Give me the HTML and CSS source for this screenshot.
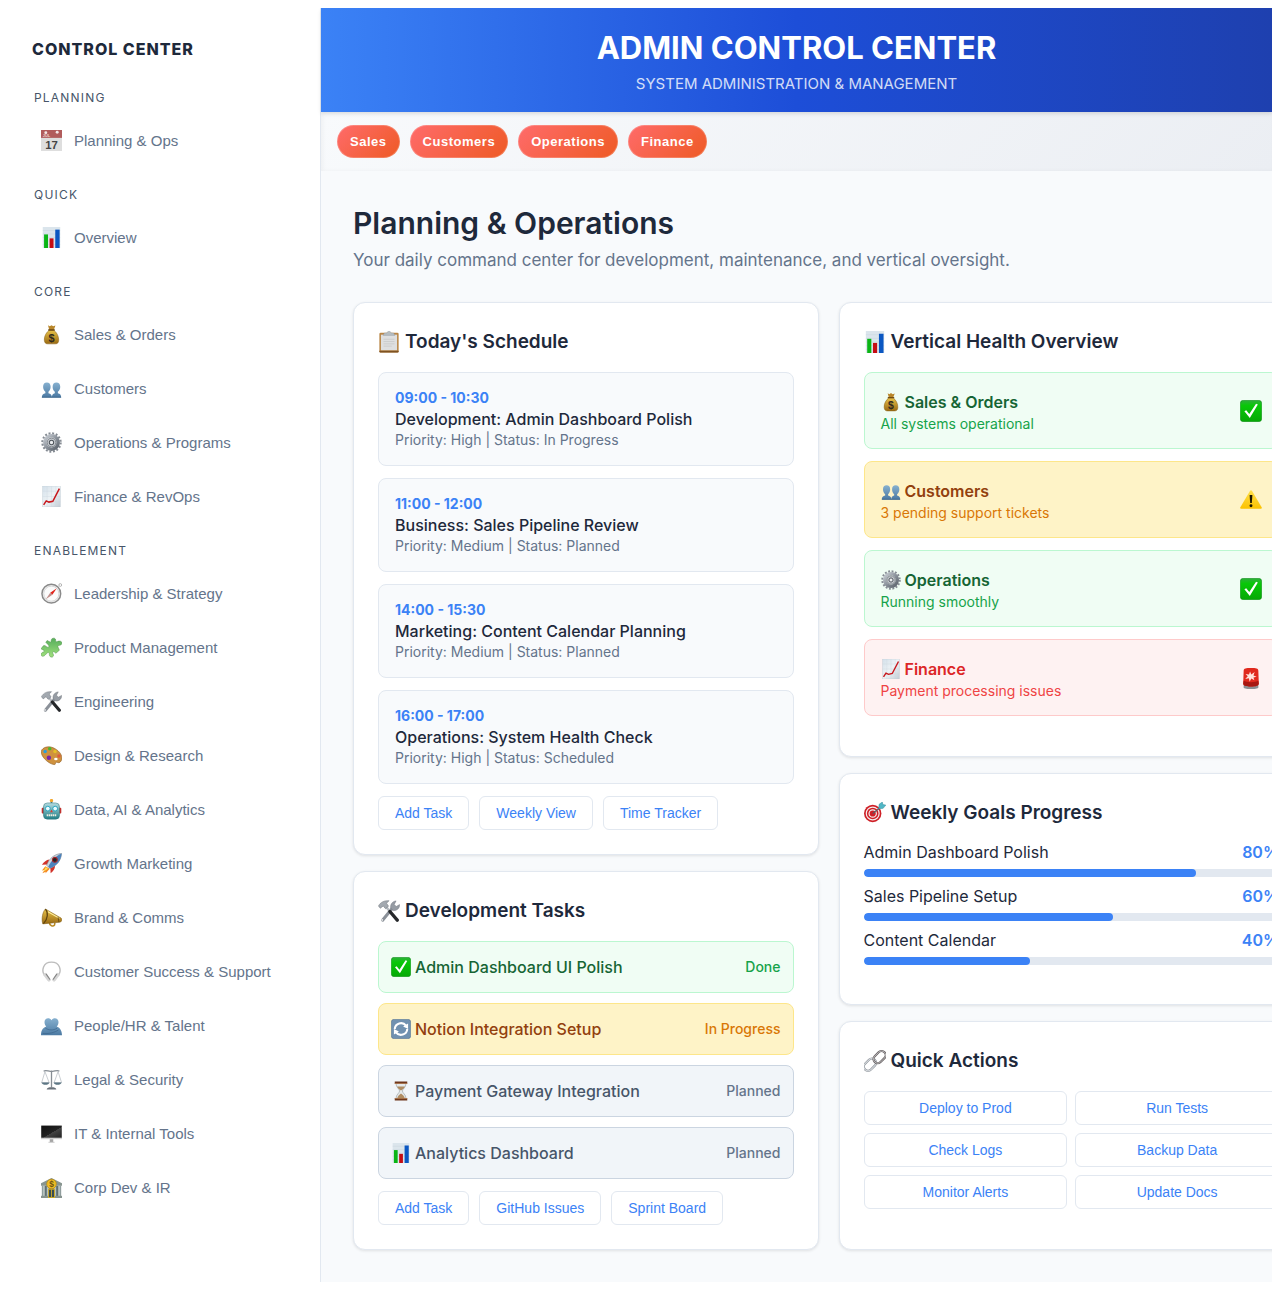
FILE: index.html
```html
<!DOCTYPE html>
<html lang="en">
<head>
<meta charset="utf-8">
<meta name="viewport" content="width=device-width, initial-scale=1">
<title>Admin Control Center</title>
<link rel="stylesheet" href="styles.css">
</head>
<body>
<svg class="sprite" aria-hidden="true">
  <defs>
    <linearGradient id="g-steel" x1="0" y1="0" x2="1" y2="1"><stop offset="0" stop-color="#c9ced4"/><stop offset=".5" stop-color="#8b929b"/><stop offset="1" stop-color="#5c636c"/></linearGradient>
    <linearGradient id="g-gold" x1="0" y1="0" x2="0" y2="1"><stop offset="0" stop-color="#e8c34a"/><stop offset="1" stop-color="#9a6a12"/></linearGradient>
    <linearGradient id="g-green" x1="0" y1="0" x2="0" y2="1"><stop offset="0" stop-color="#2fae3c"/><stop offset=".25" stop-color="#08c808"/><stop offset="1" stop-color="#06a806"/></linearGradient>
    <linearGradient id="g-blue" x1="0" y1="0" x2="0" y2="1"><stop offset="0" stop-color="#86b0cf"/><stop offset="1" stop-color="#4c7aa3"/></linearGradient>
    <linearGradient id="g-paper" x1="0" y1="0" x2="1" y2="1"><stop offset="0" stop-color="#d3e0ea"/><stop offset=".5" stop-color="#eef3f6"/><stop offset="1" stop-color="#c3cdd6"/></linearGradient>
    <linearGradient id="g-screen" x1="0" y1="0" x2="1" y2="1"><stop offset="0" stop-color="#111"/><stop offset=".55" stop-color="#222"/><stop offset=".56" stop-color="#444"/><stop offset="1" stop-color="#222"/></linearGradient>
    <linearGradient id="g-leaf" x1="0" y1="0" x2="0" y2="1"><stop offset="0" stop-color="#55ad5c"/><stop offset="1" stop-color="#a0e07c"/></linearGradient>
    <linearGradient id="g-teal" x1="0" y1="0" x2="0" y2="1"><stop offset="0" stop-color="#b5dbe0"/><stop offset="1" stop-color="#1f7f86"/></linearGradient>
    <linearGradient id="g-warn" x1="0" y1="0" x2="0" y2="1"><stop offset="0" stop-color="#ffdf4a"/><stop offset="1" stop-color="#fcc200"/></linearGradient>
  </defs>
  <symbol id="i-calendar" viewBox="0 0 24 24"><rect width="24" height="24" fill="#dedede"/><rect width="24" height="9" fill="#b15c5c"/><circle cx="5.500" cy="3" r="1.700" fill="#f4e6e6"/><circle cx="18.500" cy="2.500" r="1.700" fill="#f4e6e6"/><text x="2" y="8.500" class="glyph" font-size="4.500" fill="#ecd0d0">JUL</text><text x="12" y="21.500" class="glyph" font-size="13" text-anchor="middle" fill="#444">17</text></symbol>
  <symbol id="i-chart" viewBox="0 0 24 24"><rect x="2" width="20" height="24" fill="#dbe5ec"/><path d="M2 4h20M2 8h20M2 12h20M2 16h20M2 20h20" stroke="#c6d3dd" stroke-width=".5"/><rect x="3.500" y="8.500" width="4.500" height="15.500" fill="#0ab515"/><rect x="9.800" y="13" width="4.500" height="11" fill="#c50d14"/><rect x="16.300" y="3" width="5" height="21" fill="#0b57c2"/></symbol>
  <symbol id="i-money" viewBox="0 0 24 24"><path d="M8 1.500l2 1.200 2-1.400 2 1.400 2.500-1-2 5.300h-5z" fill="#b8862a"/><path d="M9.500 7C6 9.500 3.500 14 3.800 18.500c.2 3.300 2 4.200 4 4.200h8.400c2.200 0 3.900-1 4-4.200C20.400 14 18 9.500 14.500 7z" fill="url(#g-gold)" stroke="#8a6218" stroke-width=".6"/><path d="M8.800 6.800h6.400" stroke="#6e4a12" stroke-width="1.600" stroke-linecap="round"/><text x="12" y="20" class="glyph" font-size="12.500" text-anchor="middle" fill="#2f2a1e">$</text></symbol>
  <symbol id="i-people" viewBox="0 0 24 24"><g fill="url(#g-blue)"><path d="M1 22c0-3 1.500-3.700 4-4.600v-1.600C3.300 14.500 2.400 12.300 2.400 10c0-3 1.600-4.800 4.300-4.800S11 7 11 10c0 2.300-.9 4.500-2.500 5.800v1.600c2.300.9 4 1.600 4 4.600z"/><path d="M12.500 22c0-3 1-3.700 3.300-4.600v-1.600C14 14.500 13.300 12.300 13.300 10c0-3 1.600-4.800 4.300-4.800S22 7 22 10c0 2.300-.9 4.500-2.700 5.800v1.600C21.800 18.300 23 19 23 22z"/></g><path d="M1 21.300h22v1.300H1z" fill="#436c92"/></symbol>
  <symbol id="i-gear" viewBox="0 0 24 24"><circle cx="12" cy="12" r="10.400" fill="none" stroke="#858b93" stroke-width="2.600" stroke-dasharray="2.200 1.920"/><circle cx="12" cy="12" r="7.600" fill="none" stroke="url(#g-steel)" stroke-width="4"/><circle cx="12" cy="12" r="5" fill="#c8ccd1" stroke="#6c727a"/><circle cx="12" cy="12" r="2.500" fill="#eceef0" stroke="#4f555c" stroke-width="1.200"/></symbol>
  <symbol id="i-trend" viewBox="0 0 24 24"><rect x="2" width="20" height="24" fill="url(#g-paper)" stroke="#bcc8d1" stroke-width=".5"/><path d="M7 0v24M12 0v24M17 0v24M2 6h20M2 12h20M2 18h20" stroke="#cbd6df" stroke-width=".4"/><path d="M3 21.500l3-4.500 3 1.400 4.500-1L21 3" fill="none" stroke="#c8171c" stroke-width="1.700"/></symbol>
  <symbol id="i-compass" viewBox="0 0 24 24"><circle cx="22" cy="2.300" r="1.600" fill="none" stroke="#999" stroke-width=".8"/><circle cx="11.800" cy="12.200" r="10.700" fill="#f0f0f0" stroke="#8a8a8a" stroke-width="1.700"/><circle cx="11.800" cy="12.200" r="8.600" fill="#fbfbfb" stroke="#c4c4c4" stroke-width=".7"/><path d="M18 6l-7.500 5 2.500 2.500z" fill="#e0241b"/><path d="M5.500 18.500l5-7.500 2.500 2.500z" fill="#c08d8a"/></symbol>
  <symbol id="i-puzzle" viewBox="0 0 24 24"><path d="M7 4l4 2c1-1 0-2.500 1.500-4 1.600-1.400 4.600-.6 4.300 1.800-.2 1.600.5 2 1.900 1.300 2.500-1 5.300-.3 5.200 2-.1 2-2.200 2.300-3.600 2.500-1.300.2-1.200 1.300-.6 2.500l1.300 3-4 3.500-1.800-1.500c-1.300-.9-2.500.3-1.600 1.800 1.500 2.200.2 4.700-2.100 4-2-.5-2-2.600-2-4-.1-1.200-1-1.400-2-.9-1.900 1-3.200 4.500-5.800 4-2.400-.6-2-3.700.2-4.500 1.700-.6 2.300-1.200 1.600-2.200L0 13.500 2.700 10c2.400-1.500 3.900 2.800 6 1.500C10.400 10 6.500 7.500 5.500 6z" fill="url(#g-leaf)" stroke="#56964f" stroke-width=".6"/></symbol>
  <symbol id="i-tools" viewBox="0 0 24 24"><path d="M16 8.500L5 22" stroke="#8b9199" stroke-width="3.400" stroke-linecap="round"/><path d="M14 9c-1-4 1.500-7.500 5.700-8l-2 3.800 2.200 2.300L23.500 5c.4 4-3 7-7 6.500z" fill="#969ca4" stroke="#6b7178" stroke-width=".5"/><circle cx="4.600" cy="21.700" r="1" fill="#eee"/><path d="M8 6.500l6 7" stroke="#b6bbc1" stroke-width="2.600"/><path d="M13 12.500l8 9.500" stroke="#25272a" stroke-width="3.600" stroke-linecap="round"/><path d="M.5 6.500C3 2 7 .5 12 .8L9.300 3.500l2.200 3.300-3.300 2.700-2.500-3L2.500 9z" fill="#a3a9b0" stroke="#71777f" stroke-width=".6"/></symbol>
  <symbol id="i-palette" viewBox="0 0 24 24"><path d="M1 5.500C4 1.500 10.500 1 16 4.200c5.500 3 8.500 8 7.700 12-.7 3.500-3 4.500-4.700 3.800-2-.8-2.500 0-2.500 1.200 0 1.500-1.800 1.500-4.500.3C5.500 19-2 10.500 1 5.500z" fill="#cf923f" stroke="#8d5b1d" stroke-width=".7"/><ellipse cx="17" cy="16" rx="2" ry="1.400" fill="#fff"/><circle cx="4.700" cy="7.500" r="2" fill="#2b9fd9"/><circle cx="10" cy="4.300" r="2" fill="#45b82e"/><circle cx="16" cy="7.500" r="2" fill="#e3c028"/><circle cx="20.500" cy="12.500" r="2" fill="#dd5a3e"/><circle cx="9" cy="14.500" r="2.500" fill="#7926a8"/></symbol>
  <symbol id="i-robot" viewBox="0 0 24 24"><path d="M12 5V2" stroke="#3f7b82" stroke-width="2"/><circle cx="12" cy="1.800" r="1.900" fill="#f2a72e"/><rect x=".8" y="10" width="4" height="6.500" rx="1" fill="#c4312d"/><rect x="19.200" y="10" width="4" height="6.500" rx="1" fill="#c4312d"/><rect x="2.800" y="4.500" width="18.400" height="18.500" rx="4.500" fill="url(#g-teal)" stroke="#2e757c" stroke-width=".6"/><circle cx="7.800" cy="11" r="2.700" fill="#e9fbff" stroke="#19a0bd"/><circle cx="16.200" cy="11" r="2.700" fill="#e9fbff" stroke="#19a0bd"/><path d="M12 12l1.600 3h-3.200z" fill="#d93a30"/><path d="M6.500 18.500h11" stroke="#efece0" stroke-width="2.400" stroke-dasharray="1.700 .6"/></symbol>
  <symbol id="i-rocket" viewBox="0 0 24 24"><path d="M5 15l-4 5 3-.5L1.500 23l4-1.500-.5 2L10 18z" fill="#f58a20"/><path d="M5.500 16l-3 5.500L8 18z" fill="#ffe05a"/><path d="M9.500 7.500C6 8 3.500 10 1 13.500l6-.5zM16 14.500c0 3.500-1.500 6-5 8.500l-.3-6z" fill="#d2332a"/><path d="M23.500.5C16 1 9.500 5.500 6.500 14l3.500 3.500C18.500 14.500 23 8 23.500.5z" fill="#cfd6dd" stroke="#6d7780" stroke-width=".6"/><path d="M23.500.5C17 3 11 9.500 8.300 15.800l1.700 1.700C18.500 14.500 23 8 23.500.5z" fill="#4c83bd"/><circle cx="15.800" cy="7.800" r="2.800" fill="#222" stroke="#a6262a" stroke-width="1.200"/></symbol>
  <symbol id="i-megaphone" viewBox="0 0 24 24"><path d="M9.500 17c0 4 4 6 6 3.500l.4-2.500" fill="none" stroke="#b98a22" stroke-width="1.700"/><path d="M5 2.300c-3 3-4.800 11-3 17L20.500 17.500c2.500-.3 3.500-1.500 3.300-3.300-.2-1.400-1.300-2-2.500-2.500z" fill="url(#g-gold)" stroke="#7d5a12" stroke-width=".6"/><path d="M8 5.500l13 7.500" stroke="#fff2a3" stroke-width="1.200"/><path d="M5 2.500C8.500 6 8 14 2.800 19" fill="none" stroke="#5f430e" stroke-width="1.400"/><path d="M19.500 11.500l1 6" stroke="#5f430e" stroke-width=".9"/></symbol>
  <symbol id="i-headphones" viewBox="0 0 24 24"><path d="M3.800 16C.5 11 2 1.300 12 1.300S23.500 11 20.200 16" fill="none" stroke="#bcbcbc" stroke-width="1.600"/><path d="M4.500 15.500l4.500 6M19.500 15.500l-4.500 6" stroke="#d6d6d6" stroke-width="4" stroke-linecap="round"/><path d="M6 15l4 5.800M18 15l-4 5.800" stroke="#858585" stroke-width="1.300" stroke-linecap="round"/></symbol>
  <symbol id="i-hug" viewBox="0 0 24 24"><path d="M12 6C9.500 2 4 3.500 4 8c0 2.500 1 4 2 5-3 1-6 3.500-6 10h24c0-6-3-9-6-10 1-1 2-2.500 2-5 0-4.500-5.500-6-8-2z" fill="url(#g-blue)"/><path d="M5 15c4 2.500 9 3 13.500 0M2 21c6 1 14-1 18-4" fill="none" stroke="#3c658c" stroke-width=".8"/></symbol>
  <symbol id="i-scales" viewBox="0 0 24 24"><path d="M12 2v19M3 2.500c3-2 6 1 9 0 3 1 6-2 9 0" fill="none" stroke="#868d94" stroke-width="1.500"/><path d="M4.500 3L.8 15.500h8.500zM19.500 3L15 15.500h8.500z" fill="none" stroke="#b2b8be" stroke-width=".8"/><path d="M.5 15.300h9.300c-1 3.600-8.300 3.600-9.300 0zM14.300 15.300h9.300c-1 3.600-8.300 3.600-9.300 0z" fill="#5d7785"/><path d="M6.500 23.500c0-2 2.500-2.700 5.500-2.700s5.500.7 5.500 2.700z" fill="#69717a"/></symbol>
  <symbol id="i-monitor" viewBox="0 0 24 24"><rect y="3" width="24" height="15.500" fill="#cfcfcf"/><rect x=".3" y="3" width="23.400" height="13.800" fill="url(#g-screen)"/><path d="M10 18.500h4v3.300h-4z" fill="#a5a5a5"/><path d="M8.500 21.500h7v1h-7z" fill="#c2c2c2"/></symbol>
  <symbol id="i-bank" viewBox="0 0 24 24"><path d="M0 7L12 1l12 6v3H0z" fill="#88958f"/><rect x="1" y="10" width="22" height="12" fill="#5f7074"/><path d="M3 10v12M8 10v12M16 10v12M21 10v12" stroke="#b7c2be" stroke-width="2.700"/><rect y="21.500" width="24" height="2.500" fill="#87938f"/><rect x="8.500" y="14" width="7" height="9.500" fill="#394c52" stroke="#d2ae25"/><path d="M12 14v9" stroke="#d2ae25"/><circle cx="12" cy="8" r="5.500" fill="#f0bd24" stroke="#b28716" stroke-width=".8"/><text x="12" y="11.500" class="glyph" font-size="9.500" text-anchor="middle" fill="#6d5310">$</text></symbol>
  <symbol id="i-clipboard" viewBox="0 0 24 24"><rect x="1.500" y="2" width="21" height="21.500" rx="1.400" fill="#b98545"/><path d="M1.500 21.500h21v.8c0 .7-.5 1.200-1.200 1.200H2.700c-.7 0-1.200-.5-1.200-1.200z" fill="#7e5222"/><rect x="3.200" y="4" width="17.600" height="17" fill="#dedfe0"/><path d="M6 9h12M6 11.500h12M6 14h12M6 16.500h9" stroke="#cacaca" stroke-width="1"/><path d="M7 2.200h2.800c.3-2.700 4.100-2.700 4.400 0H17l1.500 2.600h-13z" fill="#b6bdc1" stroke="#8c9498" stroke-width=".4"/></symbol>
  <symbol id="i-check" viewBox="0 0 24 24"><rect x=".3" y=".3" width="23.400" height="23.400" rx="3.600" fill="url(#g-green)" stroke="#128a1c" stroke-width=".6"/><path d="M4.800 12.300l2-1.200 3.300 4.200L17.500 4l2 .9-8.800 14.600z" fill="#fff"/></symbol>
  <symbol id="i-refresh" viewBox="0 0 24 24"><rect x=".3" y=".3" width="23.400" height="23.400" rx="3.600" fill="#7091b0" stroke="#54718c" stroke-width=".6"/><path d="M4.500 12A7.500 7.500 0 0 1 18 8M19.500 12A7.500 7.500 0 0 1 6 16" fill="none" stroke="#fff" stroke-width="2.500"/><path d="M20.500 5.500V12l-6-3zM3.500 18.500V12l6 3z" fill="#fff"/></symbol>
  <symbol id="i-hourglass" viewBox="0 0 24 24"><path d="M6 3h12c0 5-4.300 6.500-4.300 9s4.300 4 4.300 9H6c0-5 4.300-6.500 4.300-9S6 8 6 3z" fill="#e5e9eb" stroke="#9da3a6" stroke-width=".8"/><path d="M7.300 6.500h9.400c-.7 2.500-3.200 3.500-4.700 5-1.500-1.500-4-2.500-4.700-5zM12 15c2 1.500 4 3 4.600 6H7.400C8 18 10 16.500 12 15z" fill="#b08d63"/><path d="M4.500.5h15v2.800h-15zM4.500 20.700h15v2.800h-15z" fill="#6e371c"/><path d="M4.500 2.300h15v1h-15zM4.500 20.700h15v.9h-15z" fill="#b47c50"/></symbol>
  <symbol id="i-warning" viewBox="0 0 24 24"><path d="M11 2c.5-.8 1.500-.8 2 0l10.600 18c.5.900.1 1.500-.8 1.500H1.200c-.9 0-1.300-.6-.8-1.500z" fill="url(#g-warn)"/><path d="M10.500 6.500h3l-.6 8.800h-1.800z" fill="#1c1600"/><circle cx="12" cy="18.200" r="1.600" fill="#1c1600"/></symbol>
  <symbol id="i-siren" viewBox="0 0 24 24"><path d="M4 19h16v3.500c0 1-5 1.500-8 1.500s-8-.5-8-1.500z" fill="#8b8f93"/><path d="M4 4c0-2.500 2.500-3 8-3s8 .5 8 3l.5 14c0 2.500-3.500 3.300-8.500 3.300S3.500 20.500 3.500 18z" fill="#e0291d"/><path d="M4 15c3 2 13 2 16 0l.5 3c0 2.500-3.500 3.300-8.500 3.300S3.500 20.500 3.500 18z" fill="#a81711"/><path d="M11 5l1.300 3.200L16 5.500l-1.300 3.700 3.500 1.300-3.500 1 1 3-3.400-2-1.800 3.500-.8-3.800-4 .8 2.800-3L6 7.500l3.800.6z" fill="#ffe3dc"/></symbol>
  <symbol id="i-target" viewBox="0 0 24 24"><circle cx="9.500" cy="12.500" r="9.500" fill="#cf2027"/><circle cx="9.500" cy="12.500" r="7" fill="none" stroke="#f5eded" stroke-width="1.300"/><circle cx="9.500" cy="12.500" r="4" fill="none" stroke="#f5eded" stroke-width="1.300"/><path d="M9.500 12.500L19 5" stroke="#50606a" stroke-width="1.200"/><path d="M16 7.500l.5-5L20 0l.6 2.800 3.200.6-2.900 3.500z" fill="#50b7c6" stroke="#2f8794" stroke-width=".5"/></symbol>
  <symbol id="i-link" viewBox="0 0 24 24"><g fill="none"><rect x="-1" y="11.500" width="15" height="9" rx="4.500" transform="rotate(-45 6.500 16)" stroke="#8b9198" stroke-width="2.400"/><rect x="-1" y="11.500" width="15" height="9" rx="4.500" transform="rotate(-45 6.500 16)" stroke="#d5d9dd" stroke-width="1.200"/><rect x="9.500" y="3.300" width="15" height="9" rx="4.500" transform="rotate(-45 17 7.800)" stroke="#6a6465" stroke-width="2.400"/><rect x="9.500" y="3.300" width="15" height="9" rx="4.500" transform="rotate(-45 17 7.800)" stroke="#bdbcbe" stroke-width="1"/></g></symbol>
</svg>

<div class="app">
  <aside class="sidebar">
    <h2 class="brand">CONTROL CENTER</h2>
    <nav aria-label="Main">
      <h3 class="side-label">PLANNING</h3>
      <a class="side-link" href="#planning"><svg class="icon"><use href="#i-calendar"/></svg>Planning &amp; Ops</a>
      <h3 class="side-label">QUICK</h3>
      <a class="side-link" href="#overview"><svg class="icon"><use href="#i-chart"/></svg>Overview</a>
      <h3 class="side-label">CORE</h3>
      <a class="side-link" href="#sales"><svg class="icon"><use href="#i-money"/></svg>Sales &amp; Orders</a>
      <a class="side-link" href="#customers"><svg class="icon"><use href="#i-people"/></svg>Customers</a>
      <a class="side-link" href="#operations"><svg class="icon"><use href="#i-gear"/></svg>Operations &amp; Programs</a>
      <a class="side-link" href="#finance"><svg class="icon"><use href="#i-trend"/></svg>Finance &amp; RevOps</a>
      <h3 class="side-label">ENABLEMENT</h3>
      <a class="side-link" href="#leadership"><svg class="icon"><use href="#i-compass"/></svg>Leadership &amp; Strategy</a>
      <a class="side-link" href="#product"><svg class="icon"><use href="#i-puzzle"/></svg>Product Management</a>
      <a class="side-link" href="#engineering"><svg class="icon"><use href="#i-tools"/></svg>Engineering</a>
      <a class="side-link" href="#design"><svg class="icon"><use href="#i-palette"/></svg>Design &amp; Research</a>
      <a class="side-link" href="#data"><svg class="icon"><use href="#i-robot"/></svg>Data, AI &amp; Analytics</a>
      <a class="side-link" href="#growth"><svg class="icon"><use href="#i-rocket"/></svg>Growth Marketing</a>
      <a class="side-link" href="#brand"><svg class="icon"><use href="#i-megaphone"/></svg>Brand &amp; Comms</a>
      <a class="side-link" href="#support"><svg class="icon"><use href="#i-headphones"/></svg>Customer Success &amp; Support</a>
      <a class="side-link" href="#people"><svg class="icon"><use href="#i-hug"/></svg>People/HR &amp; Talent</a>
      <a class="side-link" href="#legal"><svg class="icon"><use href="#i-scales"/></svg>Legal &amp; Security</a>
      <a class="side-link" href="#it"><svg class="icon"><use href="#i-monitor"/></svg>IT &amp; Internal Tools</a>
      <a class="side-link" href="#corp"><svg class="icon"><use href="#i-bank"/></svg>Corp Dev &amp; IR</a>
    </nav>
  </aside>

  <div class="content">
    <header class="banner">
      <h1 class="banner-title">ADMIN CONTROL CENTER</h1>
      <p class="banner-sub">SYSTEM ADMINISTRATION &amp; MANAGEMENT</p>
    </header>
    <div class="tabs">
      <button class="pill" type="button">Sales</button>
      <button class="pill" type="button">Customers</button>
      <button class="pill" type="button">Operations</button>
      <button class="pill" type="button">Finance</button>
    </div>
    <main class="page">
      <h2 class="page-title">Planning &amp; Operations</h2>
      <p class="page-sub">Your daily command center for development, maintenance, and vertical oversight.</p>
      <div class="board">
        <div class="column">
          <section class="card">
            <h3 class="card-title"><svg class="icon"><use href="#i-clipboard"/></svg>Today's Schedule</h3>
            <div class="stack">
              <article class="slot"><p class="slot-time">09:00 - 10:30</p><h4 class="slot-name">Development: Admin Dashboard Polish</h4><p class="slot-meta">Priority: High | Status: In Progress</p></article>
              <article class="slot"><p class="slot-time">11:00 - 12:00</p><h4 class="slot-name">Business: Sales Pipeline Review</h4><p class="slot-meta">Priority: Medium | Status: Planned</p></article>
              <article class="slot"><p class="slot-time">14:00 - 15:30</p><h4 class="slot-name">Marketing: Content Calendar Planning</h4><p class="slot-meta">Priority: Medium | Status: Planned</p></article>
              <article class="slot"><p class="slot-time">16:00 - 17:00</p><h4 class="slot-name">Operations: System Health Check</h4><p class="slot-meta">Priority: High | Status: Scheduled</p></article>
            </div>
            <div class="actions">
              <button class="btn" type="button">Add Task</button>
              <button class="btn" type="button">Weekly View</button>
              <button class="btn" type="button">Time Tracker</button>
            </div>
          </section>
          <section class="card">
            <h3 class="card-title"><svg class="icon"><use href="#i-tools"/></svg>Development Tasks</h3>
            <div class="stack tasks">
              <div class="task ok"><span class="task-name"><svg class="icon"><use href="#i-check"/></svg>Admin Dashboard UI Polish</span><span class="task-state">Done</span></div>
              <div class="task warn"><span class="task-name"><svg class="icon"><use href="#i-refresh"/></svg>Notion Integration Setup</span><span class="task-state">In Progress</span></div>
              <div class="task idle"><span class="task-name"><svg class="icon"><use href="#i-hourglass"/></svg>Payment Gateway Integration</span><span class="task-state">Planned</span></div>
              <div class="task idle"><span class="task-name"><svg class="icon"><use href="#i-chart"/></svg>Analytics Dashboard</span><span class="task-state">Planned</span></div>
            </div>
            <div class="actions">
              <button class="btn" type="button">Add Task</button>
              <button class="btn" type="button">GitHub Issues</button>
              <button class="btn" type="button">Sprint Board</button>
            </div>
          </section>
        </div>
        <div class="column">
          <section class="card">
            <h3 class="card-title"><svg class="icon"><use href="#i-chart"/></svg>Vertical Health Overview</h3>
            <div class="stack last">
              <div class="health ok"><div><h4 class="health-name"><svg class="icon"><use href="#i-money"/></svg>Sales &amp; Orders</h4><p class="health-note">All systems operational</p></div><svg class="icon health-icon"><use href="#i-check"/></svg></div>
              <div class="health warn"><div><h4 class="health-name"><svg class="icon"><use href="#i-people"/></svg>Customers</h4><p class="health-note">3 pending support tickets</p></div><svg class="icon health-icon"><use href="#i-warning"/></svg></div>
              <div class="health ok"><div><h4 class="health-name"><svg class="icon"><use href="#i-gear"/></svg>Operations</h4><p class="health-note">Running smoothly</p></div><svg class="icon health-icon"><use href="#i-check"/></svg></div>
              <div class="health bad"><div><h4 class="health-name"><svg class="icon"><use href="#i-trend"/></svg>Finance</h4><p class="health-note">Payment processing issues</p></div><svg class="icon health-icon"><use href="#i-siren"/></svg></div>
            </div>
          </section>
          <section class="card">
            <h3 class="card-title"><svg class="icon"><use href="#i-target"/></svg>Weekly Goals Progress</h3>
            <div class="goals">
              <div class="goal"><div class="goal-head"><span>Admin Dashboard Polish</span><strong>80%</strong></div><div class="bar"><div class="fill" style="width:80%"></div></div></div>
              <div class="goal"><div class="goal-head"><span>Sales Pipeline Setup</span><strong>60%</strong></div><div class="bar"><div class="fill" style="width:60%"></div></div></div>
              <div class="goal"><div class="goal-head"><span>Content Calendar</span><strong>40%</strong></div><div class="bar"><div class="fill" style="width:40%"></div></div></div>
            </div>
          </section>
          <section class="card">
            <h3 class="card-title"><svg class="icon"><use href="#i-link"/></svg>Quick Actions</h3>
            <div class="quick">
              <button class="btn" type="button">Deploy to Prod</button>
              <button class="btn" type="button">Run Tests</button>
              <button class="btn" type="button">Check Logs</button>
              <button class="btn" type="button">Backup Data</button>
              <button class="btn" type="button">Monitor Alerts</button>
              <button class="btn" type="button">Update Docs</button>
            </div>
          </section>
        </div>
      </div>
    </main>
  </div>
</div>
</body>
</html>
```
FILE: styles.css
```css
* { box-sizing: border-box; }

body {
  margin: 8px;
  background: #fff;
  color: #1e293b;
  font-family: Inter, "Liberation Sans", sans-serif;
  font-size: 16px;
}

h1, h2, h3, h4, p { margin: 0; }

.sprite { position: absolute; width: 0; height: 0; }
.icon { flex: none; width: 20px; height: 20px; }
.glyph { font-family: "Liberation Sans", sans-serif; font-weight: 700; }

.app { display: flex; overflow: hidden; }

/* Sidebar */
.sidebar {
  flex: 0 0 313px;
  padding: 24px;
  border-right: 1px solid #e2e8f0;
}
.brand {
  margin-bottom: 8px;
  font-size: 16px;
  font-weight: 800;
  letter-spacing: 1px;
  line-height: 34px;
}
.side-label {
  padding: 14px 2px 10px;
  color: #475569;
  font-size: 12px;
  font-weight: 400;
  letter-spacing: .1em;
  line-height: 19px;
}
.side-link {
  display: flex;
  align-items: center;
  gap: 12px;
  height: 46px;
  margin-bottom: 8px;
  padding: 0 9px;
  color: #64748b;
  font-family: "Liberation Sans", Arial, sans-serif;
  font-size: 15px;
  text-decoration: none;
}
.side-link .icon { width: 21px; height: 21px; }

/* Content */
.content { flex: 1; min-width: 0; background: #f8fafc; }

.banner {
  position: relative;
  padding: 16px;
  background: linear-gradient(90deg, #3b82f6 0%, #1d4ed8 50%, #1e40af 100%);
  box-shadow: 0 2px 4px rgba(0, 0, 0, .1);
  color: #fff;
  text-align: center;
}
.banner-title { font-size: 31px; font-weight: 700; line-height: 48px; }
.banner-sub { font-size: 15px; line-height: 24px; opacity: .8; }

.tabs {
  display: flex;
  flex-wrap: wrap;
  gap: 10px;
  padding: 13px 16px;
  background: linear-gradient(135deg, #f8fafc, #ebeef3);
  box-shadow: inset 2px 0 4px rgba(0, 0, 0, .04);
}
.pill {
  padding: 8px 12px;
  border: 1px solid rgba(255, 255, 255, .2);
  border-radius: 17px;
  background: linear-gradient(135deg, #ff6b6b, #ee5a24) border-box;
  color: #fff;
  font-family: "Liberation Sans", Arial, sans-serif;
  font-size: 13px;
  font-weight: 700;
  letter-spacing: .04em;
  line-height: 15px;
}

.page { box-sizing: content-box; width: 100%; padding: 32px; }
.page-title { font-size: 30px; font-weight: 600; line-height: 40px; }
.page-sub {
  margin: 4px 0 28px;
  color: #64748b;
  font-size: 17px;
  line-height: 27px;
}

.board { display: grid; grid-template-columns: 1fr 1fr; gap: 20px; }
.column { display: flex; flex-direction: column; gap: 16px; }

.card {
  padding: 24px;
  border: 1px solid #e2e8f0;
  border-radius: 12px;
  background: #fff;
  box-shadow: 0 1px 3px rgba(0, 0, 0, .1);
}
.card-title {
  display: flex;
  align-items: center;
  gap: 5px;
  margin-bottom: 15px;
  font-size: 19px;
  font-weight: 600;
  line-height: 30px;
}
.card-title .icon { width: 22px; height: 22px; }

.stack { display: grid; gap: 12px; margin-bottom: 12px; }
.last { margin-bottom: 16px; }
.tasks { gap: 10px; }

.slot {
  padding: 16px;
  border: 1px solid #e2e8f0;
  border-radius: 8px;
  background: #f8fafc;
}
.slot-time { color: #3b82f6; font-size: 14px; font-weight: 700; line-height: 18px; }
.slot-name { font-size: 16px; font-weight: 500; line-height: 24px; }
.slot-meta { color: #64748b; font-size: 14px; line-height: 18px; }

.actions { display: flex; flex-wrap: wrap; gap: 10px; }
.btn {
  padding: 8px 16px;
  border: 1px solid #e2e8f0;
  border-radius: 6px;
  background: #fff;
  color: #3b82f6;
  font-family: "Liberation Sans", Arial, sans-serif;
  font-size: 14px;
  line-height: 16px;
}

.task, .health {
  display: flex;
  align-items: center;
  justify-content: space-between;
  border: 1px solid;
  border-radius: 8px;
}
.task { padding: 12px; font-weight: 500; line-height: 26px; }
.task-name { display: flex; align-items: center; gap: 4px; }
.task-state { font-size: 14px; }

.health { padding: 16px; }
.health-name {
  display: flex;
  align-items: center;
  gap: 4px;
  font-size: 16px;
  font-weight: 600;
  line-height: 26px;
}
.health-note { font-size: 14px; line-height: 17px; }
.health-icon { width: 22px; height: 22px; }

.ok { border-color: #bbf7d0; background: #f0fdf4; color: #166534; }
.ok .task-state, .ok .health-note { color: #16a34a; }
.warn { border-color: #fde68a; background: #fef3c7; color: #92400e; }
.warn .task-state, .warn .health-note { color: #d97706; }
.idle { border-color: #cbd5e1; background: #f1f5f9; color: #475569; }
.idle .task-state { color: #64748b; }
.bad { border-color: #fecaca; background: #fef2f2; color: #dc2626; }
.bad .health-note { color: #ef4444; }

.goals { display: grid; gap: 10px; margin-bottom: 15px; }
.goal { display: grid; gap: 8px; }
.goal-head { display: flex; justify-content: space-between; line-height: 18px; }
.goal-head strong { color: #3b82f6; font-weight: 600; }
.bar { height: 8px; border-radius: 4px; background: #e2e8f0; overflow: hidden; }
.fill { height: 100%; border-radius: 4px; background: #3b82f6; }

.quick { display: grid; grid-template-columns: 1fr 1fr; gap: 8px; margin-bottom: 16px; }
```
